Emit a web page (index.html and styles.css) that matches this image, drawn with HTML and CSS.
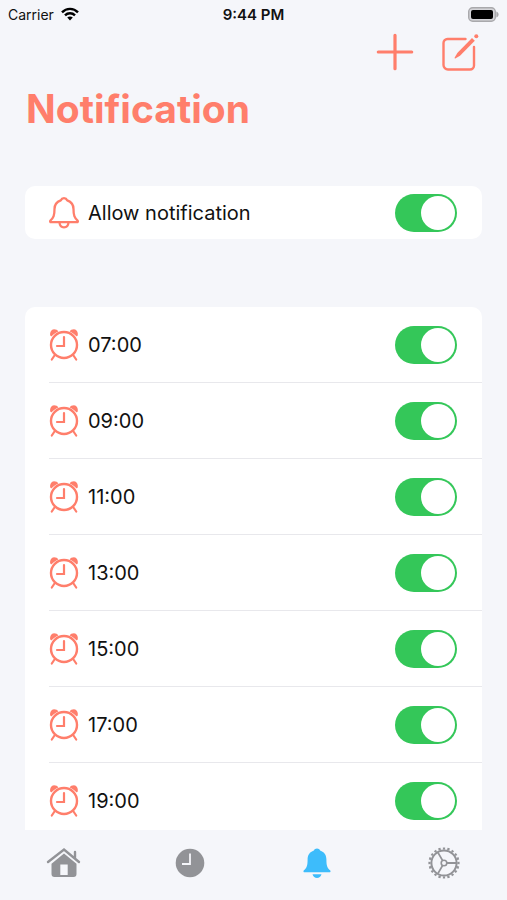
FILE: index.html
```html
<!DOCTYPE html>
<html lang="en">
<head>
    <meta charset="UTF-8">
    <meta name="viewport" content="width=device-width, initial-scale=1.0">
    <title>Notification</title>
    <link rel="stylesheet" href="styles.css">
</head>
<body>

<!-- shared icons -->
<svg class="icon-defs" aria-hidden="true">
    <symbol id="alarm" viewBox="0 0 30 34">
        <g fill="none" stroke="currentColor" stroke-width="2.400" stroke-linecap="round">
            <circle cx="15" cy="17" r="13"/>
            <path d="M15 9v9H8M5.500 27.500L2.800 31.500M24.500 27.500l2.700 4" stroke-width="2.200"/>
        </g>
        <path fill="currentColor" d="M1.300 7.500C.500 4.500 2.500 1.200 5 1.200c2 0 3.700.800 4.300 2.200C6.700 4.500 3.900 6.500 2.700 8.200c-.500.400-1.200 0-1.400-.700zM28.700 7.500C29.500 4.500 27.500 1.200 25 1.200c-2 0-3.700.800-4.300 2.200 2.600 1.100 5.400 3.100 6.600 4.800.500.400 1.200 0 1.400-.700z"/>
    </symbol>
</svg>

<header class="status-bar">
    <div class="status-left">
        <span>Carrier</span>
        <svg class="wifi" viewBox="0 0 18 14" fill="none" stroke="#000" stroke-width="2.400">
            <path d="M1 5.300C5.500.700 12.500.700 17 5.300M4 8.400c2.800-2.800 7.200-2.800 10 0"/>
            <path d="M9 13.500l-2.800-2.900c1.600-1.500 4-1.500 5.600 0z" fill="#000" stroke="none"/>
        </svg>
    </div>
    <span class="status-time">9:44 PM</span>
    <div class="status-right">
        <svg class="battery" viewBox="0 0 31 15">
            <rect x=".700" y=".700" width="26.600" height="13.600" rx="4" fill="#d4d4d8" stroke="#a9a9ac" stroke-width="1.400"/>
            <rect x="3" y="3" width="22" height="9" rx="2" fill="#000"/>
            <path d="M28.300 4.500c3 1 3 5 0 6z" fill="#a9a9ac"/>
        </svg>
    </div>
</header>

<div class="toolbar">
    <button type="button" aria-label="Add">
        <svg class="tool-icon" viewBox="0 0 38 38" fill="none" stroke="currentColor" stroke-width="3.200" stroke-linecap="round">
            <path d="M19 2.300v33.400M2.300 19h33.400"/>
        </svg>
    </button>
    <button type="button" aria-label="Edit">
        <svg class="tool-icon" viewBox="0 0 38 38" fill="none" stroke="currentColor" stroke-width="2.400" stroke-linecap="round">
            <path d="M24.500 6H6.500A4 4 0 0 0 2.500 10v22a4.500 4.500 0 0 0 4.500 4.500h22a4 4 0 0 0 4-4V14"/>
            <path d="M31 5l2.800 2.800L19 22.700l-4.700 2.800c-.500.200-.900-.200-.700-.700l2.700-4.800z" fill="currentColor" stroke="none"/>
            <circle cx="35.300" cy="3.300" r="2" fill="currentColor" stroke="none"/>
        </svg>
    </button>
</div>

<h1>Notification</h1>

<main>
    <div class="card allow">
        <label class="row">
            <svg class="row-icon" viewBox="0 0 30 34" fill="none" stroke="currentColor" stroke-width="2.300" stroke-linejoin="round">
                <path d="M15 2.200c1.800 0 2.700.900 3.300 2.200C22.400 5.900 24.500 9 24.500 13c0 6.500 1 8.500 4 11.500.700.900.300 1.700-.700 1.700H2.200c-1 0-1.400-.800-.700-1.700 3-3 4-5 4-11.500 0-4 2.100-7.100 6.200-8.600.600-1.300 1.500-2.200 3.300-2.200z"/>
                <path d="M10.500 26.500c.500 6.500 8.500 6.500 9 0"/>
            </svg>
            <span>Allow notification</span>
            <input type="checkbox" class="switch" checked>
        </label>
    </div>

    <div class="card alarms">
        <label class="row">
            <svg class="row-icon"><use href="#alarm"/></svg>
            <span>07:00</span>
            <input type="checkbox" class="switch" checked>
        </label>
        <label class="row">
            <svg class="row-icon"><use href="#alarm"/></svg>
            <span>09:00</span>
            <input type="checkbox" class="switch" checked>
        </label>
        <label class="row">
            <svg class="row-icon"><use href="#alarm"/></svg>
            <span>11:00</span>
            <input type="checkbox" class="switch" checked>
        </label>
        <label class="row">
            <svg class="row-icon"><use href="#alarm"/></svg>
            <span>13:00</span>
            <input type="checkbox" class="switch" checked>
        </label>
        <label class="row">
            <svg class="row-icon"><use href="#alarm"/></svg>
            <span>15:00</span>
            <input type="checkbox" class="switch" checked>
        </label>
        <label class="row">
            <svg class="row-icon"><use href="#alarm"/></svg>
            <span>17:00</span>
            <input type="checkbox" class="switch" checked>
        </label>
        <label class="row">
            <svg class="row-icon"><use href="#alarm"/></svg>
            <span>19:00</span>
            <input type="checkbox" class="switch" checked>
        </label>
    </div>
</main>

<nav class="tab-bar">
    <a href="#home" aria-label="Home">
        <svg class="tab-icon" viewBox="0 0 36 36">
            <path d="M3 17L19 4.500l15 12.500M30 12.500V7" fill="none" stroke="currentColor" stroke-width="2.400" stroke-linecap="round"/>
            <path d="M19 8.500L6.500 18.700V29a3 3 0 0 0 3 3h19a3 3 0 0 0 3-3V18.700zM15.300 19.500h7.400v10.500h-7.400z" fill="currentColor" fill-rule="evenodd"/>
        </svg>
    </a>
    <a href="#history" aria-label="History">
        <svg class="tab-icon" viewBox="0 0 36 36">
            <circle cx="18" cy="18" r="14.300" fill="currentColor"/>
            <path d="M18 8.500V19h-8" fill="none" stroke="#f5f6fa" stroke-width="1.800"/>
        </svg>
    </a>
    <a href="#notification" aria-label="Notification" class="active">
        <svg class="tab-icon" viewBox="0 0 36 36" fill="currentColor">
            <path d="M18 3.500c1.600 0 2.400.700 3.100 1.900 4.300 1.500 6.300 4.600 6.300 9 0 6 .900 8.400 3.700 10.800.900 1 .400 2.100-.800 2.100H5.700c-1.200 0-1.700-1.100-.800-2.100 2.800-2.400 3.700-4.800 3.700-10.800 0-4.400 2-7.500 6.300-9 .700-1.200 1.500-1.900 3.100-1.900z"/>
            <path d="M13.500 29.300h9c-.900 4.900-8.100 4.900-9 0z"/>
        </svg>
    </a>
    <a href="#settings" aria-label="Settings">
        <svg class="tab-icon" viewBox="0 0 36 36" fill="none" stroke="currentColor">
            <circle cx="18" cy="18" r="14.500" stroke-width="2.200" pathLength="40" stroke-dasharray="1 1" stroke-dashoffset=".500"/>
            <circle cx="18" cy="18" r="12.600" stroke-width="2"/>
            <circle cx="18" cy="18" r="2.800" stroke-width="1.600"/>
            <path d="M21 18h9M16.500 15.400L12 7.600M16.500 20.600L12 28.400" stroke-width="1.800"/>
        </svg>
    </a>
</nav>

</body>
</html>
```

FILE: styles.css
```css
* {
    box-sizing: border-box;
}
body {
    font-family: Inter, "Liberation Sans", sans-serif;
    margin: 0;
    height: 100vh;
    display: flex;
    flex-direction: column;
    background-color: #f5f6fa;
    color: #111;
}
.icon-defs {
    display: none;
}
.status-bar {
    display: grid;
    grid-template-columns: 1fr auto 1fr;
    align-items: center;
    height: 28px;
    padding: 0 8px;
    font-size: 14px;
}
.status-left {
    display: flex;
    align-items: center;
    gap: 7px;
}
.status-time {
    font-size: 15px;
    font-weight: 600;
}
.status-right {
    display: flex;
    justify-content: flex-end;
}
.wifi {
    width: 18px;
    height: 14px;
}
.battery {
    width: 31px;
    height: 15px;
}
.toolbar {
    display: flex;
    justify-content: flex-end;
    gap: 27px;
    padding: 5px 28px 0 0;
}
.toolbar button {
    padding: 0;
    border: none;
    background: none;
    color: #ff7e6b;
    cursor: pointer;
}
.tool-icon {
    display: block;
    width: 38px;
    height: 38px;
}
h1 {
    margin: 12px 26px 0;
    font-size: 39px;
    line-height: 52px;
    font-weight: 700;
    color: #ff7e6b;
}
main {
    flex: 1;
    min-height: 0;
    padding: 51px 25px 0;
    overflow-y: auto;
    scrollbar-width: none;
}
.card {
    background-color: #fff;
    border-radius: 10px;
    padding-left: 24px;
}
.allow {
    margin-bottom: 68px;
}
.row {
    display: flex;
    align-items: center;
    gap: 9px;
    height: 53px;
    padding-right: 25px;
    font-size: 20px;
}
.alarms .row {
    height: 76px;
    border-bottom: 1px solid #e8e8ec;
}
.alarms .row:last-child {
    border-bottom: none;
}
.row-icon {
    width: 30px;
    height: 34px;
    color: #ff7e6b;
}
/* toggle switch */
.switch {
    appearance: none;
    width: 62px;
    height: 38px;
    margin: 0 0 0 auto;
    padding: 2px;
    display: flex;
    border-radius: 19px;
    background-color: #d9d9de;
    cursor: pointer;
}
.switch::before {
    content: "";
    width: 34px;
    height: 34px;
    border-radius: 50%;
    background-color: #fff;
}
.switch:checked {
    justify-content: flex-end;
    background-color: #34c759;
}
.tab-bar {
    display: grid;
    grid-template-columns: repeat(4, 1fr);
    height: 70px;
    padding-top: 15px;
    background-color: #f5f6fa;
}
.tab-bar a {
    display: flex;
    justify-content: center;
    color: #929397;
}
.tab-bar .active {
    color: #3dbcfb;
}
.tab-icon {
    width: 36px;
    height: 36px;
}
```
